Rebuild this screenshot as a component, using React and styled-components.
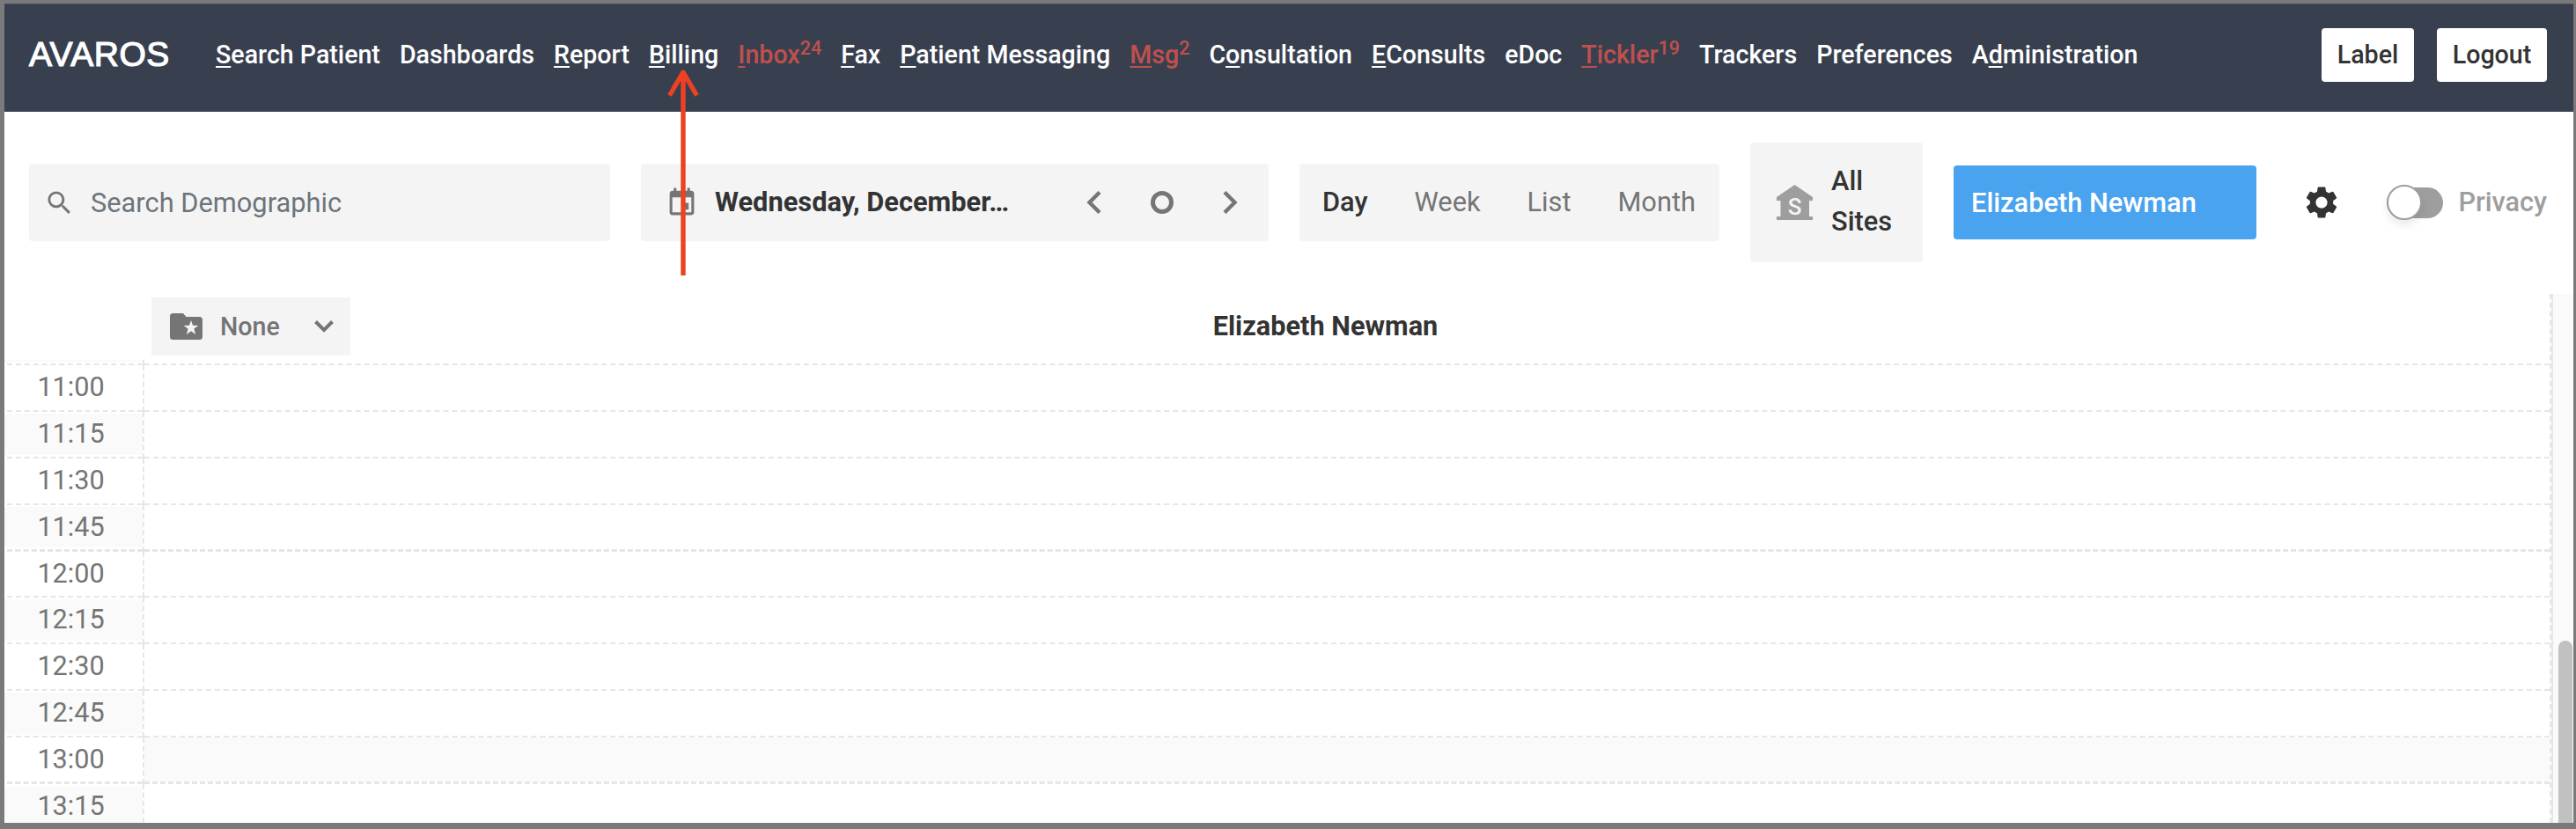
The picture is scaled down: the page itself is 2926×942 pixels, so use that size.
import React, { useState } from "react";
import styled, { createGlobalStyle } from "styled-components";
import { MdSearch, MdEvent, MdSettings } from "react-icons/md";

const GlobalStyle = createGlobalStyle`
  * {
    box-sizing: border-box;
  }

  body {
    margin: 0;
    font-family: Roboto, "Liberation Sans", sans-serif;
    color: #333;
  }

  button {
    font-family: inherit;
    border: none;
    background: none;
    padding: 0;
  }
`;

const Page = styled.div`
  position: relative;
  width: 2926px;
  height: 942px;
  display: flex;
  flex-direction: column;
  overflow: hidden;
  background-color: #fff;
  border-style: solid;
  border-color: #7a7a7a;
  border-width: 4px 3px 7px 5px;
`;

const Header = styled.header`
  flex: none;
  height: 123px;
  padding: 0 30px 8px 28px;
  display: flex;
  align-items: center;
  background-color: #384050;
  border-top: 1px solid #484d58;
`;

const Logo = styled.div`
  width: 212px;
  font-family: "Liberation Sans", Arial, sans-serif;
  font-size: 39px;
  line-height: 44px;
  letter-spacing: 0.5px;
  color: #fff;
  -webkit-text-stroke: 1.2px #fff;
`;

const Nav = styled.nav`
  flex: 1;
  display: flex;
  gap: 22px;
`;

const NavLink = styled.a`
  font-size: 28.6px;
  font-weight: 500;
  line-height: 36px;
  white-space: nowrap;
  color: ${(props) => (props.$alert ? "#c0504d" : "#fff")};

  u {
    text-decoration-thickness: 2px;
    text-underline-offset: 3px;
  }

  sup {
    font-size: 21.5px;
    line-height: 0;
    vertical-align: 10px;
  }
`;

const HeaderButtons = styled.div`
  display: flex;
  gap: 26px;
`;

const HeaderButton = styled.button`
  width: ${(props) => props.$width}px;
  height: 61px;
  border-radius: 4px;
  background-color: #fff;
  color: #333;
  font-size: 28.6px;
  font-weight: 500;
`;

const Toolbar = styled.div`
  flex: none;
  height: 205px;
  padding: 1px 30px 0 28px;
  display: flex;
  align-items: center;
  font-size: 30.8px;
`;

const Box = styled.div`
  flex: none;
  display: flex;
  align-items: center;
  height: 88px;
  margin-right: 35px;
  border-radius: 4px;
  background-color: #f4f4f4;
  color: #757575;
`;

const SearchBox = styled(Box)`
  width: 660px;
  padding-left: 17px;

  input {
    flex: 1;
    margin-left: 18px;
    padding: 0;
    border: none;
    outline: none;
    background: none;
    font-family: inherit;
    font-size: 30.8px;
  }

  input::placeholder {
    color: #6c757d;
  }
`;

const DateBox = styled(Box)`
  width: 713px;
  padding-left: 28px;
`;

const DateText = styled.div`
  width: 340px;
  margin-left: 19px;
  padding-bottom: 2px;
  font-weight: 700;
  color: #333;
  white-space: nowrap;
`;

const Arrows = styled.div`
  display: flex;
  align-items: center;
  margin-left: 82px;
  gap: 56px;

  svg {
    display: block;
  }
`;

const ViewBox = styled(Box)`
  width: 477px;
  padding: 0 27px 2px 26px;
  justify-content: space-between;
`;

const ViewButton = styled.button`
  font-size: 30.8px;
  font-weight: ${(props) => (props.$active ? 500 : 400)};
  color: ${(props) => (props.$active ? "#333" : "#757575")};
`;

const SiteBox = styled(Box)`
  width: 196px;
  height: 136px;
  padding-left: 30px;
  gap: 21px;
  font-weight: 500;
  line-height: 46px;
  color: #333;
`;

const SiteName = styled.div`
  padding-bottom: 2px;
`;

const ProviderBox = styled(Box)`
  width: 344px;
  height: 84px;
  padding-left: 20px;
  margin-right: 52px;
  background-color: #4aa3ef;
  color: #fff;
  font-weight: 500;
`;

const Privacy = styled.label`
  display: flex;
  align-items: center;
  margin-left: auto;
  color: #9e9e9e;
  font-size: 30.6px;
  font-weight: 500;
  line-height: 40px;
`;

const Switch = styled.span`
  width: 64px;
  height: 35px;
  margin-right: 17px;
  display: flex;
  align-items: center;
  border-radius: 18px;
  background-color: #9e9e9e;
`;

const Knob = styled.span`
  flex: none;
  width: 40px;
  height: 40px;
  border: 2px solid #9e9e9e;
  border-radius: 50%;
  background-color: #fff;
  box-shadow: 0 6px 10px rgba(0, 0, 0, 0.08);
`;

const Schedule = styled.div`
  flex: 1;
  min-height: 0;
  display: flex;
`;

const Calendar = styled.div`
  width: 2891px;
  display: flex;
  flex-direction: column;
`;

const CalendarHead = styled.div`
  flex: none;
  height: 77px;
  display: flex;
  align-items: center;
  padding: 6px 0 5px 167px;
`;

const GroupSelect = styled.div`
  width: 226px;
  height: 66px;
  padding: 0 19px 0 21px;
  display: flex;
  align-items: center;
  background-color: #f4f4f4;
  color: #757575;
  font-size: 28.6px;
  font-weight: 500;

  span {
    flex: 1;
    margin-left: 20px;
  }
`;

const ProviderName = styled.div`
  flex: 1;
  margin-right: 283px;
  padding-bottom: 1px;
  text-align: center;
  font-size: 30.7px;
  font-weight: 700;
`;

const Row = styled.div`
  flex: none;
  height: ${(props) => props.$height}px;
  display: flex;
`;

const TimeCell = styled.div`
  width: 159px;
  border-right: 2px dashed #e6e6e6;
  display: flex;
  flex-direction: column;

  &::after {
    content: "";
    margin-left: 3px;
    border-bottom: ${(props) => (props.$thick ? 3 : 2)}px dashed #e6e6e6;
  }
`;

const TimeLabel = styled.div`
  flex: 1;
  margin: ${(props) => (props.$cut ? 0 : 2)}px 0 2px;
  padding: 0 6px 1px 0;
  display: flex;
  align-items: center;
  justify-content: center;
  background-color: ${(props) => (props.$shaded ? "#fafafa" : "#fff")};
  color: #757575;
  font-size: 30.6px;
  line-height: 40px;
`;

const Slot = styled.div`
  flex: 1;
  border-bottom: ${(props) => (props.$thick ? 3 : 2)}px dashed #e6e6e6;
  background-color: ${(props) => (props.$shaded ? "#fafafa" : "#fff")};
  background-clip: padding-box;
`;

const ScrollArea = styled.div`
  flex: 1;
  margin-top: 2px;
  display: flex;
  border-left: 2px dashed #e6e6e6;
`;

const ScrollTrack = styled.div`
  flex: 1;
  padding: 394px 1px 0 6px;
  border-left: 2px solid #e6e6e6;
  background-color: #fafafa;
`;

const ScrollThumb = styled.div`
  height: 300px;
  border-radius: 8px;
  background-color: #c1c1c1;
`;

const Pointer = styled.svg`
  position: absolute;
  left: 750px;
  top: 72px;
`;

const links = [
  { text: "Search Patient", key: 0 },
  { text: "Dashboards" },
  { text: "Report", key: 0 },
  { text: "Billing", key: 0 },
  { text: "Inbox", key: 0, count: 24 },
  { text: "Fax", key: 0 },
  { text: "Patient Messaging", key: 0 },
  { text: "Msg", key: 0, count: 2 },
  { text: "Consultation", key: 1 },
  { text: "EConsults", key: 0 },
  { text: "eDoc" },
  { text: "Tickler", key: 0, count: 19 },
  { text: "Trackers" },
  { text: "Preferences" },
  { text: "Administration", key: 1 },
];

const rows = [
  { time: "11:00", height: 53 },
  { time: "11:15", height: 53 },
  { time: "11:30", height: 53 },
  { time: "11:45", height: 53, thick: true },
  { time: "12:00", height: 52 },
  { time: "12:15", height: 53 },
  { time: "12:30", height: 53 },
  { time: "12:45", height: 53 },
  { time: "13:00", height: 53, thick: true, blocked: true },
  { time: "13:15", height: 53 },
];

function LinkText({ text, hotkey }) {
  if (hotkey === undefined) return text;
  return (
    <>
      {text.slice(0, hotkey)}
      <u>{text[hotkey]}</u>
      {text.slice(hotkey + 1)}
    </>
  );
}

function App() {
  const [view, setView] = useState("Day");

  return (
    <Page>
      <GlobalStyle />
      <Header>
        <Logo>AVAROS</Logo>
        <Nav>
          {links.map((link) => (
            <NavLink key={link.text} $alert={link.count}>
              <LinkText text={link.text} hotkey={link.key} />
              {link.count && <sup>{link.count}</sup>}
            </NavLink>
          ))}
        </Nav>
        <HeaderButtons>
          <HeaderButton $width={105}>Label</HeaderButton>
          <HeaderButton $width={125}>Logout</HeaderButton>
        </HeaderButtons>
      </Header>

      <Toolbar>
        <SearchBox>
          <MdSearch size={35} />
          <input type="text" placeholder="Search Demographic" />
        </SearchBox>
        <DateBox>
          <MdEvent size={37} />
          <DateText>Wednesday, December…</DateText>
          <Arrows>
            <svg width="17" height="26" viewBox="0 0 17 26">
              <path d="M15 1.5L3.5 13L15 24.5" fill="none" stroke="#757575" strokeWidth="4.4" />
            </svg>
            <svg width="26" height="26" viewBox="0 0 26 26">
              <circle cx="13" cy="13" r="10.5" fill="none" stroke="#757575" strokeWidth="5" />
            </svg>
            <svg width="17" height="26" viewBox="0 0 17 26">
              <path d="M2 1.5L13.5 13L2 24.5" fill="none" stroke="#757575" strokeWidth="4.4" />
            </svg>
          </Arrows>
        </DateBox>
        <ViewBox>
          {["Day", "Week", "List", "Month"].map((name) => (
            <ViewButton key={name} $active={view === name} onClick={() => setView(name)}>
              {name}
            </ViewButton>
          ))}
        </ViewBox>
        <SiteBox>
          <svg width="41" height="40" viewBox="0 0 41 40">
            <path d="M20.5 0L41 14V18H37V36H41V40H0V36H4.5V18H0V14Z" fill="#9e9e9e" />
            <text x="20.5" y="33.5" textAnchor="middle" fontSize="26" fontWeight="500" fill="#f4f4f4">
              S
            </text>
          </svg>
          <SiteName>
            All
            <br />
            Sites
          </SiteName>
        </SiteBox>
        <ProviderBox>Elizabeth Newman</ProviderBox>
        <MdSettings size={44} />
        <Privacy>
          <Switch>
            <Knob />
          </Switch>
          Privacy
        </Privacy>
      </Toolbar>

      <Schedule>
        <Calendar>
          <CalendarHead>
            <GroupSelect>
              <svg width="37" height="30" viewBox="0 0 37 30">
                <path
                  d="M3.5 0H15L18.5 4H33.5Q37 4 37 7.5V26.5Q37 30 33.5 30H3.5Q0 30 0 26.5V3.5Q0 0 3.5 0Z"
                  fill="#757575"
                />
                <path
                  d="M24 8L26 13.7L32.3 13.9L27.4 17.6L29.1 24L24 20.3L18.9 24L20.6 17.6L15.7 13.9L22 13.7Z"
                  fill="#f4f4f4"
                />
              </svg>
              <span>None</span>
              <svg width="22" height="14" viewBox="0 0 22 14">
                <path d="M1.5 1.5L11 11L20.5 1.5" fill="none" stroke="#757575" strokeWidth="4" />
              </svg>
            </GroupSelect>
            <ProviderName>Elizabeth Newman</ProviderName>
          </CalendarHead>
          {/* bottom edge of the 10:45 row, scrolled under the head */}
          <Row $height={6}>
            <TimeCell>
              <TimeLabel $shaded $cut />
            </TimeCell>
            <Slot />
          </Row>
          {rows.map((row, i) => (
            <Row key={row.time} $height={row.height}>
              <TimeCell $thick={row.thick}>
                <TimeLabel $shaded={i % 2 === 1}>{row.time}</TimeLabel>
              </TimeCell>
              <Slot $thick={row.thick} $shaded={row.blocked} />
            </Row>
          ))}
        </Calendar>
        <ScrollArea>
          <ScrollTrack>
            <ScrollThumb />
          </ScrollTrack>
        </ScrollArea>
      </Schedule>

      <Pointer width="44" height="242" viewBox="0 0 44 242">
        <path
          d="M21 237V6M5.5 32.5L21 6L36.5 32.5"
          fill="none"
          stroke="#ee4023"
          strokeWidth="5.4"
          strokeLinejoin="round"
        />
      </Pointer>
    </Page>
  );
}

export default App;
